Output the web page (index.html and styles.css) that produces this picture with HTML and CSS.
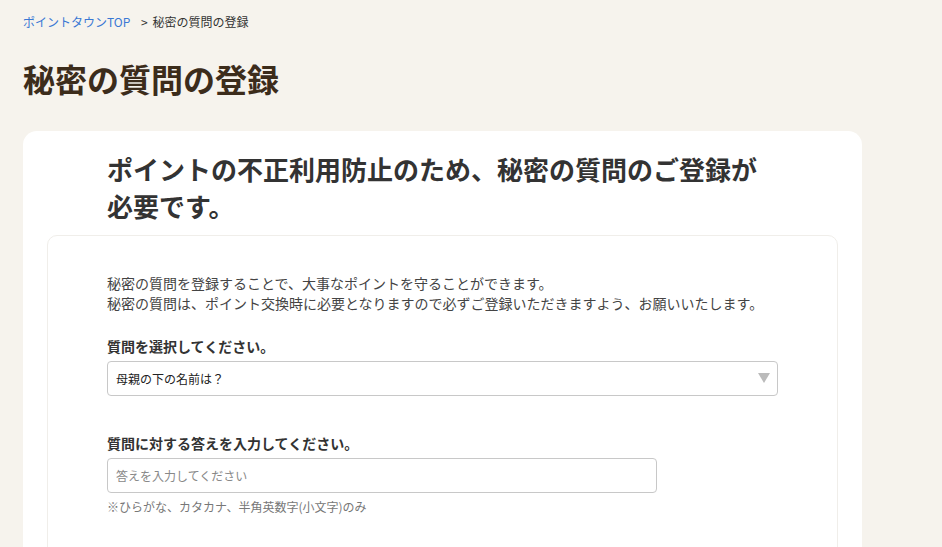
FILE: index.html
```html
<!DOCTYPE html>
<html lang="ja">
<head>
    <meta charset="UTF-8">
    <meta name="viewport" content="width=device-width, initial-scale=1.0">
    <title>秘密の質問の登録</title>
    <link rel="stylesheet" href="styles.css">
</head>
<body>

    <nav class="breadcrumb">
        <a href="#">ポイントタウンTOP</a>
        <span class="sep">&gt;</span>
        <span>秘密の質問の登録</span>
    </nav>

    <h1 class="page-title">秘密の質問の登録</h1>

    <div class="card">
        <h2 class="card-title">ポイントの不正利用防止のため、秘密の質問のご登録が必要です。</h2>

        <div class="form-box">
            <div class="form-inner">
                <p class="lead">
                    秘密の質問を登録することで、大事なポイントを守ることができます。<br>
                    秘密の質問は、ポイント交換時に必要となりますので必ずご登録いただきますよう、お願いいたします。
                </p>

                <div class="field">
                    <label class="label">質問を選択してください。</label>
                    <div class="select-wrap">
                        <select class="select">
                            <option>母親の下の名前は？</option>
                        </select>
                        <svg class="select-arrow" width="12" height="10" viewBox="0 0 12 10">
                            <polygon points="0,0 12,0 6,10" fill="#bbbbbb"/>
                        </svg>
                    </div>
                </div>

                <div class="field">
                    <label class="label">質問に対する答えを入力してください。</label>
                    <input class="text-input" type="text" placeholder="答えを入力してください">
                    <p class="note">※ひらがな、カタカナ、半角英数字(小文字)のみ</p>
                </div>
            </div>
        </div>
    </div>

</body>
</html>
```

FILE: styles.css
```css
body {
    margin: 0;
    padding: 13px 23px 0;
    background-color: #f6f3ed;
    font-family: "Noto Sans CJK JP", "Noto Sans", sans-serif;
    color: #333;
    height: 534px;
    overflow: hidden;
}
.breadcrumb {
    font-size: 12px;
    line-height: 18px;
    color: #333;
}
.breadcrumb a {
    color: #3a78d4;
    text-decoration: none;
}
.breadcrumb .sep {
    margin: 0 2px 0 8px;
}
.page-title {
    margin: 23px 0 0;
    font-size: 32px;
    line-height: 48px;
    font-weight: bold;
    color: #3c2c1b;
}
.card {
    margin-top: 29px;
    width: 839px;
    box-sizing: border-box;
    background-color: #fff;
    border-radius: 14px;
    padding: 19px 24px 40px 24px;
    min-height: 460px;
}
.card-title {
    margin: 0 0 0 60px;
    width: 671px;
    font-size: 26px;
    line-height: 37px;
    font-weight: bold;
    color: #333;
}
.form-box {
    margin-top: 11px;
    border: 1px solid #f0eeea;
    border-radius: 10px;
    padding: 37px 60px 40px 59px;
    min-height: 300px;
}
.form-inner {
    width: 671px;
}
.lead {
    margin: 0;
    font-size: 14px;
    line-height: 20px;
    color: #444;
}
.field {
    margin-top: 23px;
}
.field + .field {
    margin-top: 37px;
}
.label {
    display: block;
    font-size: 14px;
    line-height: 20px;
    font-weight: bold;
    color: #333;
    margin-bottom: 5px;
}
.select-wrap {
    position: relative;
}
.select {
    width: 100%;
    height: 35px;
    box-sizing: border-box;
    border: 1px solid #c8c8c8;
    border-radius: 4px;
    background: #fff;
    padding: 0 8px;
    font-family: inherit;
    font-size: 12px;
    color: #222;
    appearance: none;
    -webkit-appearance: none;
}
.select-arrow {
    position: absolute;
    right: 8px;
    top: 12px;
}
.text-input {
    display: block;
    width: 550px;
    height: 35px;
    box-sizing: border-box;
    border: 1px solid #c8c8c8;
    border-radius: 4px;
    padding: 0 8px;
    font-family: inherit;
    font-size: 12px;
}
.text-input::placeholder {
    color: #888;
}
.note {
    margin: 5px 0 0;
    font-size: 12px;
    line-height: 18px;
    color: #777;
}
```
